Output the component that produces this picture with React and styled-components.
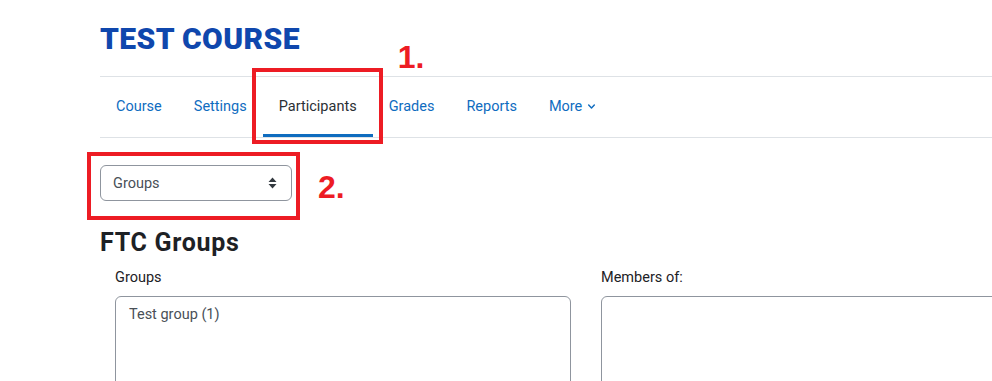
import React from "react";
import styled, { createGlobalStyle } from "styled-components";

const GlobalStyle = createGlobalStyle`
  body {
    margin: 0;
    background: #fff;
    font-family: Roboto, "Noto Sans", sans-serif;
    color: #1d2125;
    overflow: hidden;
  }
`;

const Page = styled.div`
  width: 972px;
  padding-left: 100px;
`;

const Title = styled.h1`
  margin: 21px 0 19px;
  font-size: 30px;
  line-height: 36px;
  font-weight: 900;
  color: #0f47ad;
  letter-spacing: 0.4px;
`;

const Nav = styled.nav`
  display: flex;
  height: 60px;
  border-top: 1px solid #dee2e6;
  border-bottom: 1px solid #dee2e6;
`;

const NavItem = styled.div`
  position: relative;
  display: flex;
  align-items: center;
  gap: 5px;
  padding: 1px 16px 0;
  font-size: 14.5px;
  color: ${(p) => (p.$active ? "#2b3035" : "#0f6cbf")};
  border-bottom: 3px solid ${(p) => (p.$active ? "#0f6cbf" : "transparent")};
`;

const Mark = styled.div`
  position: absolute;
  border: 4px solid #ed1c24;
  pointer-events: none;
`;

const MarkLabel = styled.span`
  position: absolute;
  font-family: "Liberation Sans", Arial, sans-serif;
  font-weight: 700;
  font-size: 32px;
  line-height: 1;
  color: #ed1c24;
  white-space: nowrap;
`;

const SelectWrap = styled.div`
  position: relative;
  width: 192px;
  margin-top: 27px;
`;

const Select = styled.div`
  display: flex;
  align-items: center;
  justify-content: space-between;
  height: 34px;
  padding: 0 14px 0 12px;
  border: 1px solid #8f959e;
  border-radius: 6px;
  font-size: 14.5px;
  color: #495057;
`;

const Heading = styled.h3`
  margin: 27px 0 10px;
  font-size: 25px;
  line-height: 29px;
  font-weight: 700;
  letter-spacing: 0.7px;
  color: #1d2125;
`;

const Row = styled.div`
  display: grid;
  grid-template-columns: 486px 486px;
`;

const Col = styled.div`
  padding: 0 15px;
`;

const Label = styled.div`
  font-size: 14.5px;
  line-height: 21px;
  margin-bottom: 8px;
  color: #1d2125;
`;

const ListBox = styled.div`
  height: 200px;
  border: 1px solid #8f959e;
  border-radius: 6px;
  padding: 7px 13px;
  font-size: 14.5px;
  line-height: 21px;
  color: #495057;
`;

const Chevron = () => (
  <svg width="9" height="9" viewBox="0 0 16 16">
    <path d="M3 5.5l5 5 5-5" fill="none" stroke="#0f6cbf" strokeWidth="2.6" strokeLinecap="round" strokeLinejoin="round" />
  </svg>
);

const UpDown = () => (
  <svg width="9" height="12" viewBox="0 0 9 12">
    <path d="M4.5 0.5L8.5 5H0.5z M4.5 11.5L8.5 7H0.5z" fill="#343a40" />
  </svg>
);

export default function App() {
  return (
    <Page>
      <GlobalStyle />
      <Title>TEST COURSE</Title>
      <Nav>
        <NavItem>Course</NavItem>
        <NavItem>Settings</NavItem>
        <NavItem $active>
          Participants
          <Mark style={{ top: -9, left: -11, right: -10, bottom: -10 }} />
          <MarkLabel style={{ left: 135, top: -36 }}>1.</MarkLabel>
        </NavItem>
        <NavItem>Grades</NavItem>
        <NavItem>Reports</NavItem>
        <NavItem>
          More <Chevron />
        </NavItem>
      </Nav>
      <SelectWrap>
        <Select>
          Groups <UpDown />
        </Select>
        <Mark style={{ top: -13, left: -13, right: -8, bottom: -19 }} />
        <MarkLabel style={{ left: 218, top: 6 }}>2.</MarkLabel>
      </SelectWrap>
      <Heading>FTC Groups</Heading>
      <Row>
        <Col>
          <Label>Groups</Label>
          <ListBox>Test group (1)</ListBox>
        </Col>
        <Col>
          <Label>Members of:</Label>
          <ListBox />
        </Col>
      </Row>
    </Page>
  );
}
